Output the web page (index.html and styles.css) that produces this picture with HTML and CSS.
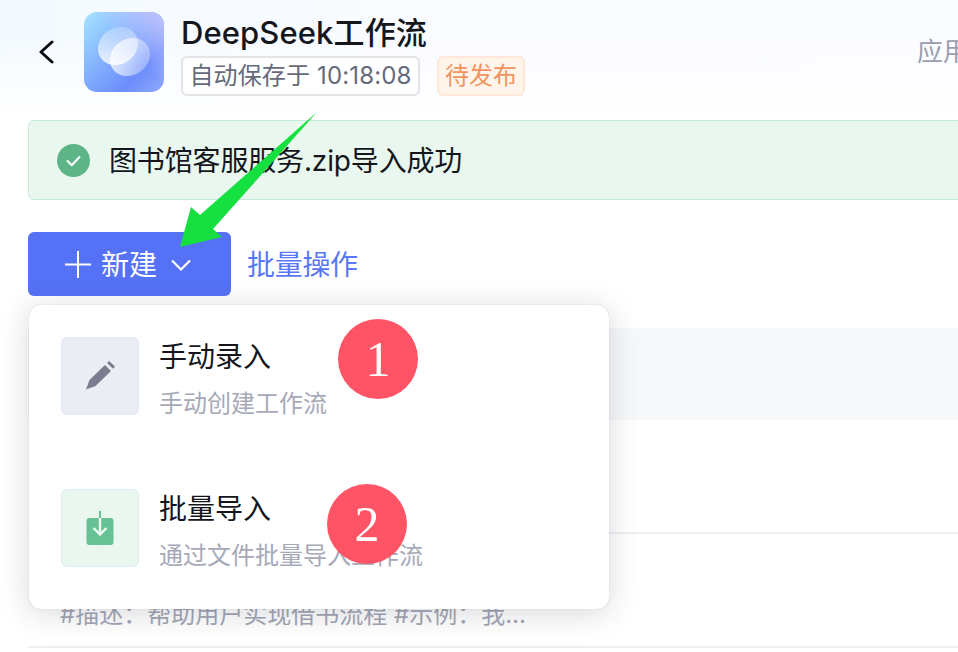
FILE: index.html
```html
<!DOCTYPE html>
<html lang="zh-CN">
<head>
  <meta charset="UTF-8">
  <title>DeepSeek工作流</title>
  <link rel="stylesheet" href="styles.css">
</head>
<body>
  <div class="page">
    <div class="top">
      <header class="header">
        <button class="back" aria-label="返回">
          <svg width="16" height="24" viewBox="0 0 16 24"><path d="M14 2 3 12l11 10" fill="none" stroke="#0b0d12" stroke-width="3" stroke-linecap="round" stroke-linejoin="round"/></svg>
        </button>
        <svg class="logo" width="80" height="80" viewBox="0 0 80 80">
          <defs>
            <linearGradient id="logoBg" x1="0" y1="0" x2="1" y2="1">
              <stop offset="0" stop-color="#a4e4ff"/>
              <stop offset="0.72" stop-color="#6c8dfc"/>
              <stop offset="1" stop-color="#8fa9fb"/>
            </linearGradient>
            <linearGradient id="logoTint" x1="0" y1="1" x2="1" y2="0">
              <stop offset="0.55" stop-color="#c9c6ff" stop-opacity="0"/>
              <stop offset="1" stop-color="#c6c4fb" stop-opacity="0.95"/>
            </linearGradient>
            <linearGradient id="leafA" x1="0" y1="1" x2="1" y2="0">
              <stop offset="0" stop-color="#fff" stop-opacity="0.95"/>
              <stop offset="1" stop-color="#fff" stop-opacity="0.12"/>
            </linearGradient>
            <linearGradient id="leafB" x1="0" y1="0" x2="1" y2="1">
              <stop offset="0" stop-color="#fff" stop-opacity="0.85"/>
              <stop offset="1" stop-color="#fff" stop-opacity="0.2"/>
            </linearGradient>
          </defs>
          <rect width="80" height="80" rx="13" fill="url(#logoBg)"/>
          <rect width="80" height="80" rx="13" fill="url(#logoTint)"/>
          <ellipse cx="34" cy="34" rx="21" ry="18" transform="rotate(-35 34 34)" fill="url(#leafA)"/>
          <ellipse cx="46" cy="45" rx="21" ry="18" transform="rotate(-35 46 45)" fill="url(#leafB)"/>
        </svg>
        <div class="app-info">
          <h1 class="app-name">DeepSeek工作流</h1>
          <div class="tags">
            <span class="tag tag-save">自动保存于 10:18:08</span>
            <span class="tag tag-draft">待发布</span>
          </div>
        </div>
        <span class="app-link">应用</span>
      </header>
    </div>

    <main class="content">
      <div class="notice">
        <svg width="33" height="33" viewBox="0 0 33 33"><circle cx="16.5" cy="16.5" r="16.5" fill="#5db587"/><path d="m10.500 17 4.200 4.300 7.800-8.300" fill="none" stroke="#fff" stroke-width="2" stroke-linecap="round" stroke-linejoin="round"/></svg>
        <span class="notice-text">图书馆客服服务.zip导入成功</span>
      </div>

      <div class="toolbar">
        <button class="btn-new">
          <svg width="26" height="27" viewBox="0 0 26 27"><path d="M0 13.500h26M13 0v27" stroke="#fff" stroke-width="2"/></svg>
          <span class="btn-label">新建</span>
          <svg class="caret" width="20" height="12" viewBox="0 0 20 12"><path d="m1 1.500 9 9 9-9" fill="none" stroke="#fff" stroke-width="2.200"/></svg>
        </button>
        <a class="batch-link">批量操作</a>

        <div class="menu">
          <div class="menu-item">
            <div class="menu-icon icon-gray">
              <svg width="32" height="32" viewBox="0 0 32 32"><path d="M2 29.500 5.500 20 21 5l6 6-15.500 15z" fill="#7b7d8e"/><path d="m23 3 2-2 6 5.500-2 2.200z" fill="#7b7d8e"/></svg>
            </div>
            <div class="menu-text">
              <div class="menu-title">手动录入</div>
              <div class="menu-desc">手动创建工作流</div>
            </div>
            <span class="badge badge-one">1</span>
          </div>
          <div class="menu-item">
            <div class="menu-icon icon-green">
              <svg width="28" height="36" viewBox="0 0 28 36"><rect x="0.500" y="8" width="27" height="27" rx="3" fill="#66c295"/><path d="M14 1v7" stroke="#66c295" stroke-width="2"/><path d="M14 8v16M7.500 18l6.500 6.500 6.500-6.500" fill="none" stroke="#eef9f3" stroke-width="2.400"/></svg>
            </div>
            <div class="menu-text">
              <div class="menu-title">批量导入</div>
              <div class="menu-desc">通过文件批量导入工作流</div>
            </div>
            <span class="badge badge-two">2</span>
          </div>
        </div>
      </div>

      <div class="table">
        <div class="table-head"></div>
        <div class="table-row"></div>
        <div class="table-row">
          <div class="row-desc">#描述：帮助用户实现借书流程 #示例：我...</div>
        </div>
      </div>
    </main>

    <svg class="arrow" width="140" height="140" viewBox="0 0 140 140"><path d="M137 2 33 119l9 8-42 10 11-40 9 8z" fill="#16e03f"/></svg>
  </div>
</body>
</html>
```

FILE: styles.css
```css
* {
  box-sizing: border-box;
}
html, body {
  margin: 0;
  padding: 0;
  background: #fff;
}
body {
  font-family: Inter, "Noto Sans CJK SC", sans-serif;
  color: #14161c;
}
.page {
  position: relative;
  width: 958px;
  height: 652px;
  overflow: hidden;
}
.top {
  height: 120px;
  background: linear-gradient(180deg, rgba(255,255,255,0) 30%, #fff 100%), linear-gradient(100deg, #f3faff 0%, #fafbff 45%, #fbfcff 100%);
}
.header {
  display: flex;
  align-items: flex-start;
  padding: 12px 0 0 38px;
}
.back {
  flex: none;
  width: 16px;
  height: 24px;
  margin: 28px 30px 0 0;
  padding: 0;
  border: 0;
  background: none;
}
.logo {
  flex: none;
  display: block;
  margin-right: 17px;
}
.app-info {
  flex: none;
}
.app-name {
  margin: 0 0 2px;
  font-size: 31px;
  font-weight: 500;
  line-height: 42px;
  letter-spacing: 0.1px;
}
.tags {
  display: flex;
  gap: 17px;
}
.tag {
  height: 40px;
  border: 2px solid;
  border-radius: 6px;
  font-size: 24px;
  line-height: 36px;
  text-align: center;
  white-space: nowrap;
}
.tag-save {
  width: 239px;
  background: #fff;
  border-color: #e3e4ea;
  color: #666a7a;
  letter-spacing: 0.15px;
}
.tag-draft {
  width: 88px;
  background: #fff4ea;
  border-color: #fde8d9;
  color: #f0945f;
}
.app-link {
  flex: none;
  width: 41px;
  margin: 22px 0 0 auto;
  overflow: hidden;
  font-size: 26px;
  line-height: 36px;
  white-space: nowrap;
  color: #9a9eb0;
}
.content {
  padding-left: 28px;
}
.notice {
  display: flex;
  align-items: center;
  gap: 20px;
  width: 960px;
  height: 80px;
  padding-left: 28px;
  background: #e9f7ef;
  border: 1px solid #c6ebd6;
  border-radius: 6px;
  font-size: 28px;
}
.notice-text {
  margin: -3px 0 0 -1px;
  letter-spacing: -0.15px;
}
.toolbar {
  position: relative;
  display: flex;
  align-items: center;
  gap: 16px;
  margin: 32px 0;
}
.btn-new {
  display: flex;
  align-items: center;
  width: 203px;
  height: 64px;
  padding: 0 0 0 37px;
  border: 0;
  border-radius: 6px;
  background: #5572f6;
  color: #fff;
  font-family: inherit;
  font-size: 28px;
}
.btn-label {
  margin: -2px 0 0 10px;
}
.caret {
  margin: 2px 0 0 14px;
}
.batch-link {
  margin-top: -2px;
  font-size: 28px;
  letter-spacing: -0.3px;
  color: #5b78f4;
}
.menu {
  position: absolute;
  z-index: 2;
  top: 73px;
  left: 1px;
  display: flex;
  flex-direction: column;
  gap: 70px;
  width: 580px;
  height: 304px;
  padding: 32px;
  background: #fff;
  border-radius: 12px;
  box-shadow: 0 0 1px rgba(40,44,60,.3), 0 4px 30px rgba(40,44,60,.18);
}
.menu-item {
  position: relative;
  display: flex;
  align-items: flex-start;
  gap: 20px;
}
.menu-icon {
  flex: none;
  display: flex;
  align-items: center;
  justify-content: center;
  width: 78px;
  height: 78px;
  border: 1px solid #dfe8fb;
  border-radius: 6px;
}
.icon-gray {
  background: #ecedf2;
}
.icon-green {
  background: #e9f7ef;
}
.menu-title {
  font-size: 28px;
  line-height: 40px;
}
.menu-desc {
  margin-top: 12px;
  font-size: 24px;
  line-height: 30px;
  white-space: nowrap;
  color: #a6a9b8;
}
.badge {
  position: absolute;
  display: flex;
  align-items: center;
  justify-content: center;
  width: 80px;
  height: 80px;
  border-radius: 50%;
  background: #ff5465;
  color: #fff;
  font-family: "Liberation Serif", serif;
  font-size: 50px;
}
.badge-one {
  top: -18px;
  left: 277px;
}
.badge-two {
  top: -5px;
  left: 266px;
}
.table-head {
  height: 92px;
  background: #f7f8fa;
}
.table-row {
  display: flex;
  align-items: flex-end;
  height: 114px;
  padding: 0 0 16px 32px;
  border-bottom: 2px solid #eeeff4;
}
.row-desc {
  font-size: 24px;
  line-height: 30px;
  white-space: nowrap;
  color: #a3a6b5;
}
.arrow {
  position: absolute;
  z-index: 3;
  top: 110px;
  left: 180px;
}
```
